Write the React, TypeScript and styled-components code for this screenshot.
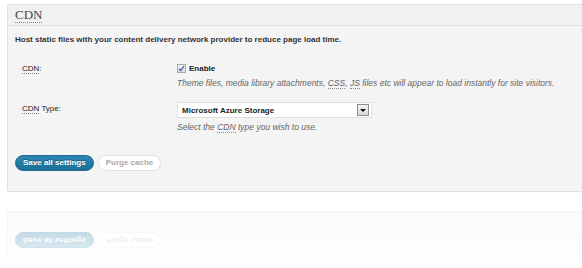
import React from "react";
import styled, { createGlobalStyle } from "styled-components";

const GlobalStyle = createGlobalStyle`
  html, body {
    margin: 0;
    padding: 0;
    background: #ffffff;
    overflow: hidden;
  }
  body {
    font-family: "Liberation Sans", Arial, sans-serif;
    font-size: 8px;
    color: #333333;
  }
`;

const Page = styled.div`
  width: 582px;
  height: 268px;
  padding: 4px 0 0 7px;
  box-sizing: border-box;
  overflow: hidden;
`;

const Panel = styled.div`
  width: 600px;
  background: #f4f4f4;
  border: 1px solid #dfdfdf;
  border-radius: 2px;
`;

const Header = styled.div`
  height: 20px;
  background: #f1f1f1;
  border-bottom: 1px solid #dfdfdf;
  display: flex;
  align-items: center;
  padding: 0 7px;
`;

const Title = styled.h3`
  margin: 0;
  font-family: "Liberation Serif", "Times New Roman", serif;
  font-size: 13px;
  font-weight: normal;
  color: #464646;
`;

const Abbr = styled.abbr`
  text-decoration: none;
  border-bottom: 1px dotted #8a8a8a;
`;

const Body = styled.div`
  padding: 8px 7px 20px;
`;

const Intro = styled.p`
  margin: 0;
  font-weight: bold;
  line-height: 12px;
  color: #333333;
`;

const Form = styled.div`
  display: grid;
  grid-template-columns: 155px 1fr;
  row-gap: 13px;
  margin: 17px 0 0 7px;
`;

const Label = styled.div<{ $top: number }>`
  padding-top: ${(p) => p.$top}px;
  line-height: 11px;
  color: #222222;
`;

const Field = styled.div`
  display: flex;
  flex-direction: column;
  align-items: flex-start;
`;

const CheckLine = styled.label`
  display: flex;
  align-items: center;
  gap: 3px;
  height: 11px;
  font-weight: bold;
  color: #222222;
`;

const Box = styled.span`
  width: 9px;
  height: 9px;
  box-sizing: border-box;
  border: 1px solid #a8a8a8;
  background: linear-gradient(#f6f6f6, #dcdcdc);
  display: flex;
  align-items: center;
  justify-content: center;
`;

const Hint = styled.span`
  font-style: italic;
  font-size: 8.5px;
  color: #666666;
  line-height: 12px;
  margin-top: 3px;
`;

const Select = styled.div`
  width: 195px;
  height: 16px;
  box-sizing: border-box;
  background: #ffffff;
  border: 1px solid #dfdfdf;
  display: flex;
  align-items: center;
  justify-content: space-between;
  padding: 0 2px 0 4px;
  font-weight: bold;
  color: #222222;
`;

const Arrow = styled.span`
  width: 12px;
  height: 12px;
  box-sizing: border-box;
  border: 1px solid #8c8c8c;
  background: linear-gradient(#f4f4f4, #d9d9d9);
  display: flex;
  align-items: center;
  justify-content: center;
  &::after {
    content: "";
    border-left: 3px solid transparent;
    border-right: 3px solid transparent;
    border-top: 3px solid #111111;
  }
`;

const Buttons = styled.div`
  display: flex;
  gap: 4px;
  margin-top: 22px;
`;

const Button = styled.button<{ $primary?: boolean }>`
  height: 16px;
  padding: 0 7px;
  border-radius: 9px;
  font-family: "Liberation Sans", Arial, sans-serif;
  font-size: 8px;
  font-weight: bold;
  line-height: 14px;
  cursor: pointer;
  border: 1px solid ${(p) => (p.$primary ? "#1b6a8f" : "#e2e2e2")};
  background: ${(p) =>
    p.$primary ? "linear-gradient(#2a87b3, #1e6f95)" : "#ffffff"};
  color: ${(p) => (p.$primary ? "#ffffff" : "#aaaaaa")};
  text-shadow: ${(p) => (p.$primary ? "0 -1px 0 rgba(0,0,0,0.3)" : "none")};
`;

/* mirrored copy of the panel's lower edge, fading out */
const Reflection = styled.div`
  margin-top: 19px;
  opacity: 0.35;
  -webkit-mask-image: linear-gradient(rgba(0, 0, 0, 1), rgba(0, 0, 0, 0.25));
  mask-image: linear-gradient(rgba(0, 0, 0, 1), rgba(0, 0, 0, 0.25));
`;

const ReflectedPanel = styled.div`
  width: 600px;
  height: 60px;
  box-sizing: border-box;
  background: #f4f4f4;
  border: 1px solid #dfdfdf;
  border-top: none;
  padding: 0 7px 20px;
  display: flex;
  flex-direction: column;
  justify-content: flex-end;
  transform: scaleY(-1);
`;

const Check = () => (
  <svg width="7" height="7" viewBox="0 0 7 7">
    <path d="M1 3.8 L2.8 5.6 L6 1" fill="none" stroke="#2b5fa8" strokeWidth="1.3" />
  </svg>
);

const ActionButtons = () => (
  <Buttons>
    <Button $primary>Save all settings</Button>
    <Button>Purge cache</Button>
  </Buttons>
);

export default function App() {
  return (
    <>
      <GlobalStyle />
      <Page>
        <Panel>
          <Header>
            <Title>
              <Abbr title="Content Delivery Network">CDN</Abbr>
            </Title>
          </Header>
          <Body>
            <Intro>Host static files with your content delivery network provider to reduce page load time.</Intro>
            <Form>
              <Label $top={0}>
                <Abbr>CDN</Abbr>:
              </Label>
              <Field>
                <CheckLine>
                  <Box>
                    <Check />
                  </Box>
                  Enable
                </CheckLine>
                <Hint>
                  Theme files, media library attachments, <Abbr>CSS</Abbr>, <Abbr>JS</Abbr> files etc will appear to
                  load instantly for site visitors.
                </Hint>
              </Field>
              <Label $top={1}>
                <Abbr>CDN</Abbr> Type:
              </Label>
              <Field>
                <Select>
                  Microsoft Azure Storage
                  <Arrow />
                </Select>
                <Hint>
                  Select the <Abbr>CDN</Abbr> type you wish to use.
                </Hint>
              </Field>
            </Form>
            <ActionButtons />
          </Body>
        </Panel>
        <Reflection aria-hidden="true">
          <ReflectedPanel>
            <ActionButtons />
          </ReflectedPanel>
        </Reflection>
      </Page>
    </>
  );
}
